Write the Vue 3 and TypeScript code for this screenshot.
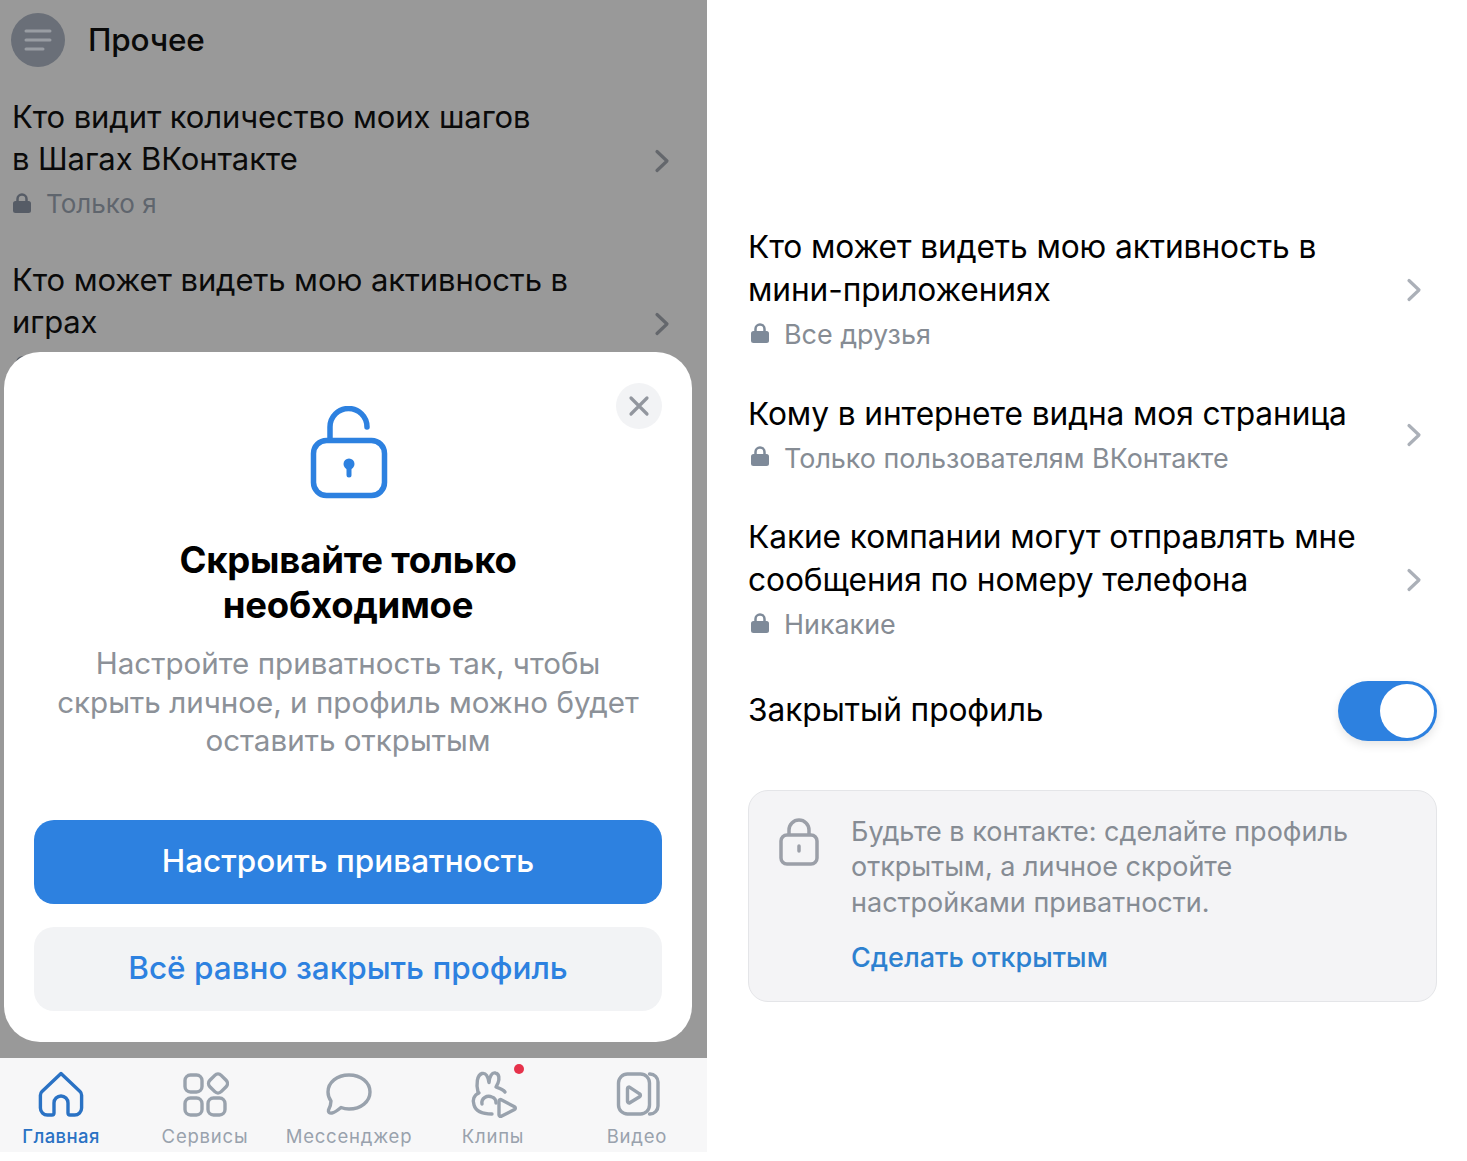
<script setup lang="ts">
interface Row { title: string[]; sub: string }
const leftRows: Row[] = [
  { title: ['Кто видит количество моих шагов', 'в Шагах ВКонтакте'], sub: 'Только я' },
  { title: ['Кто может видеть мою активность в', 'играх'], sub: 'Все друзья' },
]
const rightRows: Row[] = [
  { title: ['Кто может видеть мою активность в', 'мини-приложениях'], sub: 'Все друзья' },
  { title: ['Кому в интернете видна моя страница'], sub: 'Только пользователям ВКонтакте' },
  { title: ['Какие компании могут отправлять мне', 'сообщения по номеру телефона'], sub: 'Никакие' },
]
const tabs = ['Главная', 'Сервисы', 'Мессенджер', 'Клипы', 'Видео']
</script>

<template>
  <div class="page">
    <section class="left">
      <div class="main">
        <header class="head">
          <span class="avatar">
            <svg width="28" height="28" viewBox="0 0 28 28" fill="none" stroke="#999da3" stroke-width="3" stroke-linecap="round">
              <path d="M2 5h24M2 14h24M2 23h17" />
            </svg>
          </span>
          <span class="head-title">Прочее</span>
        </header>
        <div class="list">
          <div v-for="row in leftRows" :key="row.title[0]" class="row">
            <div class="row-body">
              <div v-for="line in row.title" :key="line" class="row-title">{{ line }}</div>
              <div class="row-sub">
                <svg class="mini-lock" width="20" height="22" viewBox="0 0 20 22"><path d="M5.500 10V7a4.500 4.500 0 0 1 9 0v3" fill="none" stroke="currentColor" stroke-width="2.500" /><rect x="1" y="9" width="18" height="12" rx="2.500" fill="currentColor" /></svg>
                <span>{{ row.sub }}</span>
              </div>
            </div>
            <svg class="chev" width="16" height="24" viewBox="0 0 16 24" fill="none" stroke="currentColor" stroke-width="3.200" stroke-linecap="round" stroke-linejoin="round"><path d="M3 2.500 13 12 3 21.500" /></svg>
          </div>
        </div>
        <div class="modal">
          <button class="close" aria-label="Закрыть">
            <svg width="22" height="22" viewBox="0 0 22 22" fill="none" stroke="#92969e" stroke-width="3.200" stroke-linecap="round"><path d="M3 3l16 16M19 3 3 19" /></svg>
          </button>
          <svg class="big-lock" width="78" height="94" viewBox="0 0 78 94" fill="none" stroke="#2d81e0">
            <path d="M20 34V21a18.500 18.500 0 0 1 37 0" stroke-width="5.500" stroke-linecap="round" />
            <rect x="3.500" y="34.500" width="71" height="55" rx="13" stroke-width="5.500" />
            <circle cx="39" cy="58" r="5.500" fill="#2d81e0" stroke="none" />
            <path d="M39 60v9" stroke-width="5" stroke-linecap="round" />
          </svg>
          <h2 class="modal-title">Скрывайте только<br />необходимое</h2>
          <p class="modal-text">Настройте приватность так, чтобы<br />скрыть личное, и профиль можно будет<br />оставить открытым</p>
          <button class="btn primary">Настроить приватность</button>
          <button class="btn secondary">Всё равно закрыть профиль</button>
        </div>
      </div>
      <nav class="tabs">
        <div v-for="(tab, i) in tabs" :key="tab" class="tab" :class="{ active: i === 0 }">
          <svg width="48" height="48" viewBox="0 0 48 48" fill="none" stroke="currentColor" stroke-width="3.400" stroke-linecap="round" stroke-linejoin="round">
            <template v-if="i === 0">
              <path d="M24 3.500 5 21.500a5 5 0 0 0-1.600 3.700V38a7 7 0 0 0 7 7H15a2 2 0 0 0 2-2V33a7 7 0 0 1 14 0v10a2 2 0 0 0 2 2h4.600a7 7 0 0 0 7-7V25.200a5 5 0 0 0-1.600-3.700Z" />
            </template>
            <template v-else-if="i === 1">
              <rect x="4" y="5" width="17" height="17" rx="5.500" />
              <rect x="29" y="5.500" width="16" height="16" rx="4.500" transform="rotate(45 37 13.500)" />
              <rect x="4" y="28" width="17" height="17" rx="5.500" />
              <rect x="27" y="28" width="17" height="17" rx="5.500" />
            </template>
            <template v-else-if="i === 2">
              <path d="M24 5C12 5 3 12.500 3 22c0 4 1.500 7 3 9 0 3-1.500 7-2.500 9-.5 2 1 3.500 3.500 3 3-.5 6-3 9-5.500 2 .8 5 1.500 8 1.500 12 0 21-7.500 21-17S36 5 24 5Z" />
            </template>
            <template v-else-if="i === 3">
              <path d="M9 22C7 14 8 5 13 3.500c4-1 6 3 7 9 .5-6 3-10.500 6.500-9.500 4 1 4 6 2.500 10l-2 4c3 1 7 2 9 5" />
              <path d="M10 23c-5 2-7 7-5 12 2 7 10 9 18 9" />
              <path d="M13 34c-1-6 5-9 10-7 3 1 4 3 4 6" />
              <path d="M30 31v14a1.500 1.500 0 0 0 2.300 1.200L45.500 39.500a1.600 1.600 0 0 0 0-2.800L32.300 29.800A1.500 1.500 0 0 0 30 31Z" />
            </template>
            <template v-else>
              <rect x="5.500" y="4" width="31" height="40" rx="9" />
              <path d="M36.500 4h.5a8 8 0 0 1 8 8v24a8 8 0 0 1-8 8h-.5" />
              <path d="M14.500 18.500v13a1.500 1.500 0 0 0 2.300 1.200l9.800-6a1.700 1.700 0 0 0 0-2.900l-9.800-6.500a1.500 1.500 0 0 0-2.300 1.200Z" />
            </template>
          </svg>
          <span v-if="i === 3" class="dot"></span>
          <span class="tab-label">{{ tab }}</span>
        </div>
      </nav>
    </section>

    <section class="right">
      <div v-for="row in rightRows" :key="row.title[0]" class="row">
        <div class="row-body">
          <div v-for="line in row.title" :key="line" class="row-title">{{ line }}</div>
          <div class="row-sub">
            <svg class="mini-lock" width="20" height="22" viewBox="0 0 20 22"><path d="M5.500 10V7a4.500 4.500 0 0 1 9 0v3" fill="none" stroke="currentColor" stroke-width="2.500" /><rect x="1" y="9" width="18" height="12" rx="2.500" fill="currentColor" /></svg>
            <span>{{ row.sub }}</span>
          </div>
        </div>
        <svg class="chev" width="16" height="24" viewBox="0 0 16 24" fill="none" stroke="currentColor" stroke-width="3.200" stroke-linecap="round" stroke-linejoin="round"><path d="M3 2.500 13 12 3 21.500" /></svg>
      </div>
      <div class="switch-row">
        <span class="row-title switch-label">Закрытый профиль</span>
        <span class="switch"><span class="knob"></span></span>
      </div>
      <div class="card">
        <svg class="card-lock" width="40" height="48" viewBox="0 0 40 48" fill="none" stroke="#9b9fa8" stroke-width="3.500">
          <path d="M10 18v-6a10 10 0 0 1 20 0v6" />
          <rect x="2" y="17" width="36" height="29" rx="6" />
          <path d="M20 28v5" stroke-linecap="round" />
        </svg>
        <div class="card-body">
          <p class="card-text">Будьте в контакте: сделайте профиль<br />открытым, а личное скройте<br />настройками приватности.</p>
          <a class="card-link">Сделать открытым</a>
        </div>
      </div>
    </section>
  </div>
</template>

<style scoped>
.page {
  display: flex;
  width: 1467px;
  height: 1152px;
  background: #fff;
  font-family: Inter, "Liberation Sans", sans-serif;
  color: #000;
  overflow: hidden;
}
.left {
  width: 707px;
  flex: none;
  display: flex;
  flex-direction: column;
}
.main {
  flex: 1;
  min-height: 0;
  position: relative;
  overflow: hidden;
  background: #999;
  padding: 13px 0 0 12px;
}
.head {
  display: flex;
  align-items: center;
  height: 54px;
}
.avatar {
  width: 54px;
  height: 54px;
  margin-left: -1px;
  border-radius: 50%;
  background: #6a6f78;
  display: flex;
  align-items: center;
  justify-content: center;
  flex: none;
}
.head-title {
  margin-left: 23px;
  margin-bottom: 2px;
  font-size: 31.500px;
  font-weight: 500;
  letter-spacing: -0.2px;
  color: #0a0a0a;
}
.list {
  margin-top: 29px;
  padding-right: 37px;
  display: flex;
  flex-direction: column;
  gap: 37px;
}
.row {
  display: flex;
  align-items: center;
}
.row-body {
  flex: 1;
  min-width: 0;
}
.row-title {
  font-size: 31.700px;
  line-height: 43px;
  letter-spacing: -0.1px;
  white-space: nowrap;
}
.switch-label {
  margin-bottom: 4px;
}
.row-sub {
  display: flex;
  align-items: center;
  gap: 14px;
  margin-top: 5px;
  margin-left: 2px;
  font-size: 26.900px;
  line-height: 36px;
  color: #868c94;
}
.mini-lock {
  flex: none;
  margin-top: -3px;
  color: #7e8a99;
}
.chev {
  flex: none;
  margin-top: 3px;
  color: #abb0b8;
}
.left .row-title {
  color: #0a0a0a;
  font-size: 31px;
  line-height: 42px;
}
.left .row-sub {
  color: #5f656d;
  font-size: 26px;
  margin-top: 6px;
  margin-left: 0;
}
.left .mini-lock { color: #565c66; }
.left .chev {
  margin-top: 4px;
  color: #64676c;
}
.modal {
  position: absolute;
  left: 4px;
  top: 352px;
  width: 688px;
  height: 690px;
  box-sizing: border-box;
  padding: 54px 30px 0;
  background: #fff;
  border-radius: 36px;
  display: flex;
  flex-direction: column;
  align-items: center;
}
.close {
  position: absolute;
  top: 31px;
  right: 30px;
  width: 46px;
  height: 46px;
  border: 0;
  padding: 0;
  border-radius: 50%;
  background: #f2f3f5;
  display: flex;
  align-items: center;
  justify-content: center;
}
.big-lock {
  flex: none;
  margin-left: 2px;
}
.modal-title {
  margin: 38px 0 0;
  font-size: 36.500px;
  line-height: 45px;
  font-weight: 700;
  letter-spacing: -0.2px;
  text-align: center;
  color: #000;
}
.modal-text {
  margin: 16px 0 0;
  font-size: 29.600px;
  line-height: 38.500px;
  color: #8c9198;
  text-align: center;
  white-space: nowrap;
}
.btn {
  width: 628px;
  height: 84px;
  flex: none;
  border: 0;
  padding: 0 0 2px;
  border-radius: 20px;
  font-family: inherit;
  font-size: 31.500px;
  font-weight: 500;
}
.primary {
  margin-top: 60px;
  background: #2d81e0;
  color: #fff;
}
.secondary {
  margin-top: 23px;
  background: #f2f3f5;
  color: #2d81e0;
}
.tabs {
  height: 94px;
  flex: none;
  box-sizing: border-box;
  background: #f7f7f8;
  display: grid;
  grid-template-columns: repeat(5, 144px);
  justify-content: center;
  padding-right: 9px;
  overflow: hidden;
}
.tab {
  position: relative;
  display: flex;
  flex-direction: column;
  align-items: center;
  color: #99a2ad;
  padding-top: 12px;
}
.tab.active {
  color: #2a72c4;
}
.tab-label {
  margin-top: 6px;
  font-size: 18.500px;
  line-height: 24px;
  letter-spacing: 0.8px;
  white-space: nowrap;
}
.tab.active .tab-label {
  font-weight: 500;
  letter-spacing: 0.4px;
}
.dot {
  position: absolute;
  top: 6px;
  left: 93px;
  width: 10px;
  height: 10px;
  border-radius: 50%;
  background: #e6324b;
}
.right {
  flex: 1;
  min-width: 0;
  box-sizing: border-box;
  padding: 225px 30px 0 41px;
  display: flex;
  flex-direction: column;
}
.right .row + .row {
  margin-top: 39.500px;
}
.right .chev {
  margin-right: 15px;
}
.switch-row {
  margin-top: 39px;
  display: flex;
  align-items: center;
  justify-content: space-between;
  height: 60px;
}
.switch {
  width: 99px;
  height: 60px;
  box-sizing: border-box;
  border-radius: 30px;
  background: #2d81e0;
  display: flex;
  justify-content: flex-end;
  padding: 3px;
  box-shadow: 0 4px 10px rgba(0, 0, 0, 0.1);
}
.knob {
  width: 54px;
  height: 54px;
  border-radius: 50%;
  background: #fff;
}
.card {
  margin-top: 49px;
  height: 212px;
  box-sizing: border-box;
  border: 1px solid #e4e5e8;
  border-radius: 20px;
  background: #f4f4f6;
  display: flex;
  padding: 27px 30px 0;
}
.card-lock {
  flex: none;
}
.card-body {
  margin-left: 32px;
  margin-top: -4px;
}
.card-text {
  margin: 0;
  font-size: 27px;
  line-height: 35.300px;
  color: #868c94;
  white-space: nowrap;
}
.card-link {
  display: block;
  margin-top: 20px;
  font-size: 27px;
  line-height: 35px;
  font-weight: 500;
  color: #2d81d0;
}
</style>
<style>
body { background: #fff; }
</style>
